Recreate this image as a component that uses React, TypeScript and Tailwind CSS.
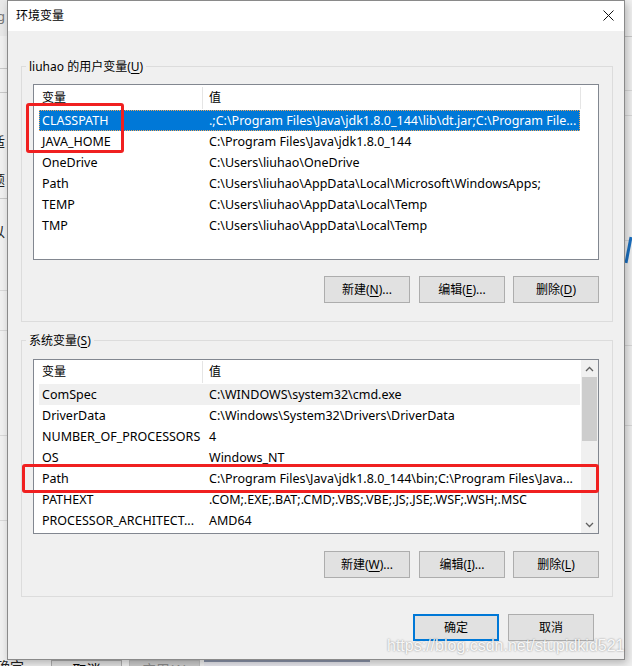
import React from "react";

type Var = [string, string];

const userVars: Var[] = [
  ["CLASSPATH", ".;C:\\Program Files\\Java\\jdk1.8.0_144\\lib\\dt.jar;C:\\Program File..."],
  ["JAVA_HOME", "C:\\Program Files\\Java\\jdk1.8.0_144"],
  ["OneDrive", "C:\\Users\\liuhao\\OneDrive"],
  ["Path", "C:\\Users\\liuhao\\AppData\\Local\\Microsoft\\WindowsApps;"],
  ["TEMP", "C:\\Users\\liuhao\\AppData\\Local\\Temp"],
  ["TMP", "C:\\Users\\liuhao\\AppData\\Local\\Temp"],
];

const sysVars: Var[] = [
  ["ComSpec", "C:\\WINDOWS\\system32\\cmd.exe"],
  ["DriverData", "C:\\Windows\\System32\\Drivers\\DriverData"],
  ["NUMBER_OF_PROCESSORS", "4"],
  ["OS", "Windows_NT"],
  ["Path", "C:\\Program Files\\Java\\jdk1.8.0_144\\bin;C:\\Program Files\\Java..."],
  ["PATHEXT", ".COM;.EXE;.BAT;.CMD;.VBS;.VBE;.JS;.JSE;.WSF;.WSH;.MSC"],
  ["PROCESSOR_ARCHITECT...", "AMD64"],
];

function Row({ name, value, kind }: { name: string; value: string; kind?: "sel" | "hover" }) {
  const base = "ml-[5px] flex h-full items-center w-[541px] pt-[2px] text-[12.5px]";
  const cls =
    kind === "sel"
      ? base + " bg-[#0078d7] text-white outline outline-1 outline-dotted outline-[#f3a85a] -outline-offset-1"
      : kind === "hover"
      ? base + " bg-[#f0f0f0]"
      : base;
  return (
    <div className="flex h-[21px] shrink-0">
      <div className={cls}>
        <div className="w-[163px] shrink-0 overflow-hidden whitespace-nowrap pl-[3px]">{name}</div>
        <div className="w-[378px] shrink-0 overflow-hidden whitespace-nowrap pl-[7px]">{value}</div>
      </div>
    </div>
  );
}

function Header({ endSep }: { endSep: boolean }) {
  return (
    <div className="flex h-[25px] shrink-0 items-center">
      <div className="w-[168px] shrink-0 pl-[8px]">变量</div>
      <div className="h-[22px] w-px shrink-0 bg-[#e5e5e5]" />
      <div className="w-[377px] shrink-0 pl-[6px]">值</div>
      {endSep && <div className="h-[22px] w-px shrink-0 bg-[#e5e5e5]" />}
    </div>
  );
}

function Btn({ children, w = "w-[86px]", primary }: { children: React.ReactNode; w?: string; primary?: boolean }) {
  return (
    <div
      className={
        "flex h-[27px] shrink-0 items-center justify-center bg-[#e1e1e1] " +
        w +
        (primary ? " border-2 border-[#0078d7]" : " border border-[#adadad]")
      }
    >
      {children}
    </div>
  );
}

function Chevron({ up }: { up?: boolean }) {
  return (
    <svg width="9" height="6" viewBox="0 0 9 6" className="block">
      <path
        d={up ? "M1 5 L4.5 1.5 L8 5" : "M1 1 L4.5 4.5 L8 1"}
        fill="none"
        stroke="#606060"
        strokeWidth="1.3"
      />
    </svg>
  );
}

export default function App() {
  return (
    <div className="relative h-[666px] w-[632px] overflow-hidden bg-[#f0f0f0] font-['Noto_Sans','Noto_Sans_CJK_SC',sans-serif] text-[12px] leading-none text-black">
      {/* Background window behind the dialog */}
      <div className="absolute left-0 top-0 h-[36px] w-[7px] bg-[#e8e8e8]" />
      <div className="absolute left-[-3px] top-[10px] text-[13px] text-[#777]">g</div>
      <div className="absolute left-0 top-[68px] h-px w-[7px] bg-[#c8c8c8]" />
      <div className="absolute left-0 top-[92px] h-px w-[7px] bg-[#c8c8c8]" />
      <div className="absolute left-[-9px] top-[135px] text-[14px] text-[#222]">适</div>
      <div className="absolute left-[-9px] top-[173px] text-[14px] text-[#222]">题</div>
      <div className="absolute left-0 top-[198px] h-px w-[7px] bg-[#c8c8c8]" />
      <div className="absolute left-[-9px] top-[225px] text-[14px] text-[#222]">以</div>
      <div className="absolute left-0 top-[290px] h-px w-[7px] bg-[#d8d8d8]" />
      <div className="absolute left-0 top-[330px] h-px w-[7px] bg-[#d8d8d8]" />
      <div className="absolute left-0 top-[435px] h-px w-[7px] bg-[#d8d8d8]" />
      <div className="absolute left-0 top-[520px] h-px w-[7px] bg-[#d8d8d8]" />
      <div className="absolute right-0 top-[36px] h-px w-[7px] bg-[#c8c8c8]" />
      <div className="absolute right-0 top-[90px] h-px w-[7px] bg-[#d8d8d8]" />
      <div className="absolute right-0 top-[115px] h-px w-[7px] bg-[#d8d8d8]" />
      <div className="absolute right-0 top-[240px] h-px w-[7px] bg-[#d8d8d8]" />
      <svg className="absolute right-0 top-[236px]" width="7" height="28" viewBox="0 0 7 28">
        <path d="M6 1 L1 27" stroke="#1a6fc0" strokeWidth="3" fill="none" />
      </svg>
      <div className="absolute right-0 top-[345px] h-px w-[7px] bg-[#d8d8d8]" />
      <div className="absolute right-0 top-[425px] h-px w-[7px] bg-[#d8d8d8]" />
      <div className="absolute left-[-4px] top-[660px] text-[14px] text-[#222]">确定</div>
      <div className="absolute left-[51px] top-[660px] flex h-[20px] w-[71px] justify-center border border-[#adadad] bg-[#e1e1e1] pt-[2px] text-[14px]">
        取消
      </div>
      <div className="absolute left-[129px] top-[660px] flex h-[20px] w-[71px] justify-center border border-[#bfbfbf] bg-[#cccccc] pt-[2px] text-[14px] text-[#8a8a8a]">
        应用(A)
      </div>
      <div className="absolute left-[204px] top-[660px] h-[10px] w-[166px] border-t-2 border-[#8a93a8] bg-[#e8e8ee]" />

      {/* Dialog window */}
      <div className="absolute left-[7px] top-0 flex h-[660px] w-[618px] flex-col border border-[#8a8a8a] bg-[#f0f0f0] shadow-[2px_3px_8px_rgba(0,0,0,0.25)]">
        {/* Title bar */}
        <div className="flex h-[30px] shrink-0 items-center justify-between bg-white pl-[8px] pr-[10px]">
          <span className="pb-[1px]">环境变量</span>
          <svg width="11" height="11" viewBox="0 0 11 11" className="mb-[1px]">
            <path d="M0.5 0.5 L10.5 10.5 M10.5 0.5 L0.5 10.5" stroke="#111" strokeWidth="1" />
          </svg>
        </div>

        <div className="flex flex-col pl-[13px] pr-[11px]">
          {/* User variables */}
          <div className="relative mt-[35px] flex w-[592px] flex-col border border-[#dcdcdc] pb-[18px] pl-[11px] pr-[13px] pt-[17px]">
            <div className="absolute left-[4px] top-[-8px] bg-[#f0f0f0] px-[3px] leading-[16px]">
              liuhao 的用户变量(<span className="underline underline-offset-2">U</span>)
            </div>
            <div className="flex h-[176px] w-[566px] flex-col border border-[#828790] bg-white">
              <Header endSep />
              {userVars.map(([n, v], i) => (
                <Row key={n} name={n} value={v} kind={i === 0 ? "sel" : undefined} />
              ))}
            </div>
            <div className="mt-[16px] flex justify-end">
              <Btn>
                新建(<span className="underline underline-offset-2">N</span>)...
              </Btn>
              <div className="w-[9px]" />
              <Btn>
                编辑(<span className="underline underline-offset-2">E</span>)...
              </Btn>
              <div className="w-[8px]" />
              <Btn>
                删除(<span className="underline underline-offset-2">D</span>)
              </Btn>
            </div>
          </div>

          {/* System variables */}
          <div className="relative mt-[18px] flex w-[592px] flex-col border border-[#dcdcdc] pb-[18px] pl-[11px] pr-[13px] pt-[18px]">
            <div className="absolute left-[4px] top-[-8px] bg-[#f0f0f0] px-[3px] leading-[16px]">
              系统变量(<span className="underline underline-offset-2">S</span>)
            </div>
            <div className="flex h-[175px] w-[566px] border border-[#828790] bg-white">
              <div className="flex w-[547px] flex-col overflow-hidden">
                <div className="flex h-[24px] shrink-0 items-center">
                  <div className="w-[168px] shrink-0 pl-[8px]">变量</div>
                  <div className="h-[22px] w-px shrink-0 bg-[#e5e5e5]" />
                  <div className="pl-[6px]">值</div>
                </div>
                {sysVars.map(([n, v], i) => (
                  <Row key={n} name={n} value={v} kind={i === 0 ? "hover" : undefined} />
                ))}
              </div>
              <div className="flex w-[17px] shrink-0 flex-col items-center bg-[#f0f0f0]">
                <div className="flex h-[17px] w-full items-center justify-center">
                  <Chevron up />
                </div>
                <div className="h-[64px] w-[15px] bg-[#cdcdcd]" />
                <div className="flex-1" />
                <div className="flex h-[17px] w-full items-center justify-center">
                  <Chevron />
                </div>
              </div>
            </div>
            <div className="mt-[17px] flex justify-end">
              <Btn>
                新建(<span className="underline underline-offset-2">W</span>)...
              </Btn>
              <div className="w-[9px]" />
              <Btn>
                编辑(<span className="underline underline-offset-2">I</span>)...
              </Btn>
              <div className="w-[8px]" />
              <Btn>
                删除(<span className="underline underline-offset-2">L</span>)
              </Btn>
            </div>
          </div>

          {/* OK / Cancel */}
          <div className="mt-[17px] flex justify-end pr-[19px]">
            <Btn primary>确定</Btn>
            <div className="w-[9px]" />
            <Btn>取消</Btn>
          </div>
        </div>
      </div>

      {/* Red annotation boxes */}
      <div className="absolute left-[26px] top-[103px] h-[50px] w-[98px] rounded-[3px] border-[3px] border-[#f02020]" />
      <div className="absolute left-[22px] top-[464px] h-[29px] w-[577px] rounded-[3px] border-[3px] border-[#f02020]" />

      {/* Watermark */}
      <div className="absolute left-[387px] top-[638px] font-['Liberation_Sans',sans-serif] text-[16px] leading-[16px] text-[rgba(255,255,255,0.92)] [text-shadow:0_0_2px_rgba(0,0,0,0.45)]">
        https://blog.csdn.net/stupidkid521
      </div>
    </div>
  );
}
